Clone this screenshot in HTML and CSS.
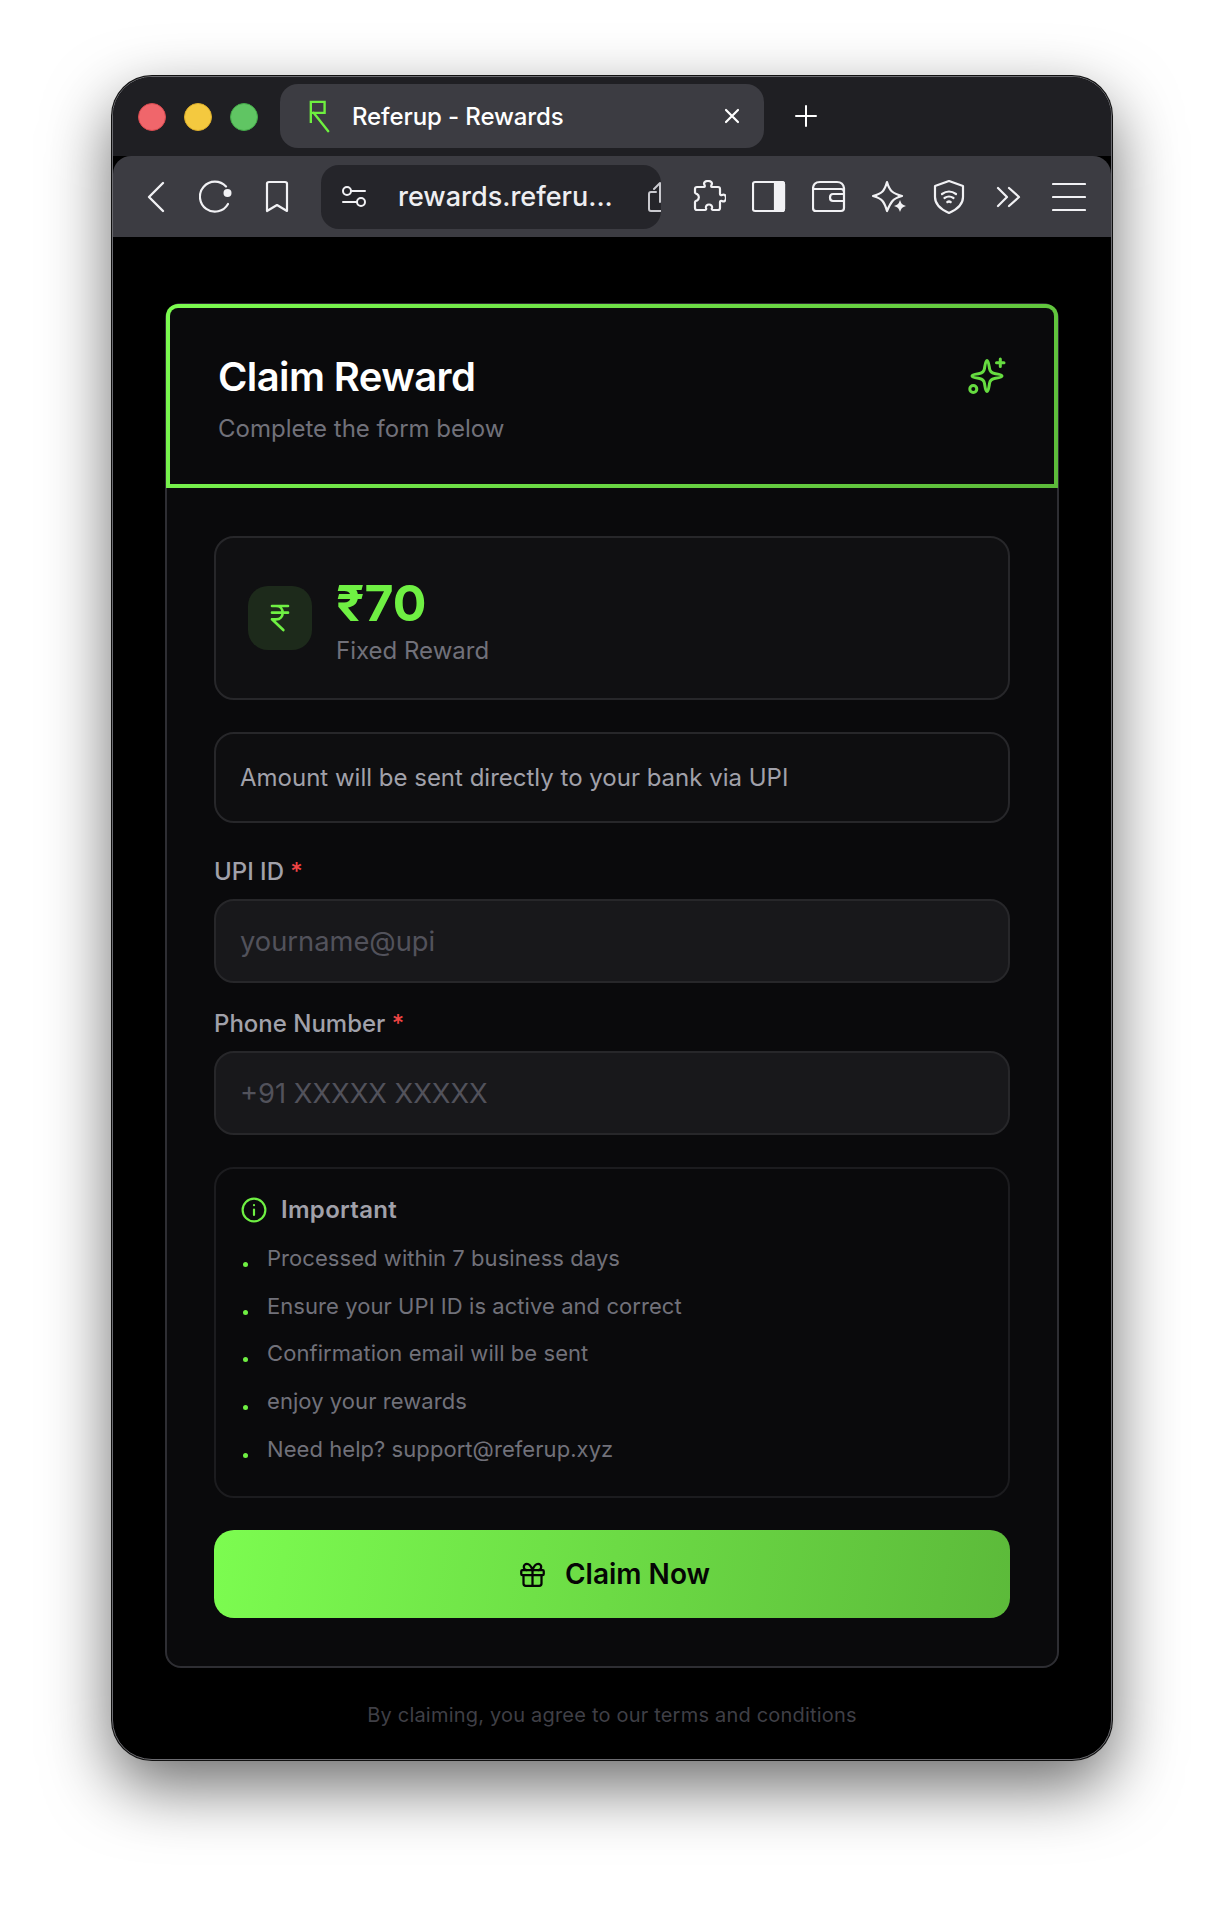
FILE: index.html
```html
<!DOCTYPE html>
<html lang="en">
<head>
  <meta charset="UTF-8">
  <meta name="viewport" content="width=device-width, initial-scale=1.0">
  <title>Referup - Rewards</title>
  <link rel="stylesheet" href="styles.css">
</head>
<body>
  <div class="window">
    <div class="tabbar">
      <div class="lights">
        <span class="light red"></span>
        <span class="light yellow"></span>
        <span class="light green"></span>
      </div>
      <div class="tab">
        <svg class="tab-logo" viewBox="0 0 24 36" fill="none" stroke="#6ef03f" stroke-width="2.6">
          <path d="M2 25V2h15v12H2"/>
          <path d="M5 14l16 20" stroke-linecap="round"/>
        </svg>
        <span class="tab-title">Referup - Rewards</span>
        <svg class="tab-close" viewBox="0 0 16 16" fill="none" stroke="#fff" stroke-width="2.2" stroke-linecap="round">
          <path d="M2 2l12 12M14 2L2 14"/>
        </svg>
      </div>
      <svg class="tab-new" viewBox="0 0 22 22" fill="none" stroke="#fff" stroke-width="2" stroke-linecap="round">
        <path d="M11 1v20M1 11h20"/>
      </svg>
    </div>

    <div class="toolbar">
      <svg class="tool tool-back" viewBox="0 0 34 34" fill="none" stroke="#f1f1f4" stroke-width="2.4" stroke-linecap="round" stroke-linejoin="round">
        <path d="M22 3L8 17l14 14"/>
      </svg>
      <svg class="tool tool-reload" viewBox="0 0 34 34" fill="none" stroke="#f1f1f4" stroke-width="2.2" stroke-linecap="round">
        <path d="M29 24A15 15 0 1 1 27 6.500"/>
        <circle cx="28.500" cy="13" r="4" fill="#f1f1f4" stroke="none"/>
      </svg>
      <svg class="tool tool-mark" viewBox="0 0 34 34" fill="none" stroke="#f1f1f4" stroke-width="2.2" stroke-linejoin="round">
        <path d="M7 3.500Q7 2 9 2h16q2 0 2 1.500V31l-10-6-10 6z"/>
      </svg>
      <div class="urlbar">
        <svg class="url-tune" viewBox="0 0 26 24" fill="none" stroke="#f1f1f4" stroke-width="2" stroke-linecap="round">
          <circle cx="6" cy="6" r="4"/>
          <path d="M10 6h14M2 17h14"/>
          <circle cx="20" cy="17" r="4"/>
        </svg>
        <span class="url-text">rewards.referu...</span>
        <svg class="url-share" viewBox="0 0 24 34" fill="none" stroke="#c9c9ce" stroke-width="2" stroke-linecap="round" stroke-linejoin="round">
          <path d="M9 12H4q-2 0-2 2v15q0 2 2 2h16"/>
          <path d="M13 22V3M7 9l6-6 6 6"/>
        </svg>
      </div>
      <div class="tools">
        <svg class="tool" viewBox="0 0 34 34" fill="none" stroke="#f1f1f4" stroke-width="2.2" stroke-linejoin="round" stroke-linecap="round">
          <path d="M5 7h7c1 0 1-1 .5-2C11 2 14 1 16 1s5 1 3.500 4c-.5 1-.5 2 .5 2h6q2 0 2 2v5c0 1 1 1.500 2 1 2-1 4 0 4 3s-2 4-4 3c-1-.5-2 0-2 1v6q0 2-2 2h-5c-1 0-1.500-1-1-2 .5-2-1-3.500-3-3.500s-3.500 1.500-3 3.500c.5 1 0 2-1 2H5q-2 0-2-2v-6c0-1 1-1 2-1.500 2.500-1.500 2.500-5 0-6.500-1-.5-2-.5-2-1.500V9q0-2 2-2z"/>
        </svg>
        <svg class="tool" viewBox="0 0 34 34" fill="none" stroke="#f1f1f4" stroke-width="2.2" stroke-linejoin="round">
          <rect x="1" y="2" width="31" height="29" rx="2"/>
          <path d="M23 2h7q2 0 2 2v25q0 2-2 2h-7z" fill="#f1f1f4"/>
        </svg>
        <svg class="tool" viewBox="0 0 34 34" fill="none" stroke="#f1f1f4" stroke-width="2.2" stroke-linejoin="round">
          <path d="M1 9q0-7 7-7h17q6 0 7 6v20q0 3-3 3H4q-3 0-3-3z"/>
          <path d="M2 9h27q3 0 3 3"/>
          <path d="M32 14H21q-3 0-3 3.500t3 3.500h11"/>
        </svg>
        <svg class="tool" viewBox="0 0 34 34" fill="none" stroke="#f1f1f4" stroke-width="2.2" stroke-linejoin="round">
          <path d="M15 2q2 7 5 9.500T30 16q-7 2-9.500 5T15 31q-2-7-4.500-10T1 16q7-2 9.500-4.500T15 2z"/>
          <path d="M28 20q1 3 2 4t4 2q-3 1-4 2t-2 4q-1-3-2-4t-4-2q3-1 4-2t2-4z" fill="#f1f1f4" stroke="none"/>
        </svg>
        <svg class="tool" viewBox="0 0 34 34" fill="none" stroke="#f1f1f4" stroke-width="2.2" stroke-linejoin="round" stroke-linecap="round">
          <path d="M17 1l14 5v11q0 10-14 16Q3 27 3 17V6z"/>
          <path d="M10 14q7-5 14 0M12.500 18q4.500-3 9 0"/>
          <path d="M15.500 22q1.500-1 3 0" stroke-width="2.600"/>
        </svg>
        <svg class="tool" viewBox="0 0 34 34" fill="none" stroke="#f1f1f4" stroke-width="2.2" stroke-linecap="round" stroke-linejoin="round">
          <path d="M6 8l9 9-9 9M17 8l10 9-10 9"/>
        </svg>
        <svg class="tool" viewBox="0 0 34 34" fill="none" stroke="#f1f1f4" stroke-width="2.2" stroke-linecap="round">
          <path d="M1 4h32M1 17h32M1 30h32"/>
        </svg>
      </div>
    </div>

    <div class="page">
      <div class="card">
        <div class="card-head">
          <div>
            <h1 class="card-title">Claim Reward</h1>
            <p class="card-sub">Complete the form below</p>
          </div>
          <svg class="head-icon" viewBox="0 0 38 38" fill="none" stroke="#66dc40" stroke-width="3" stroke-linecap="round" stroke-linejoin="round">
            <path d="M19 3.500c1.500 0 2 5 2.500 8s2 4.500 5 5 7.500 1 7.500 2.500-4.500 2-7.500 2.500-4.500 2-5 5-1 8-2.500 8-2-5-2.500-8-2-4.500-5-5-7.500-1-7.500-2.500 4.500-2 7.500-2.500 4.500-2 5-5 1-8 2.500-8z"/>
            <path d="M32.300 2v7.500M28.500 5.700h7.500"/>
            <circle cx="5.300" cy="32" r="3.500"/>
          </svg>
        </div>
        <div class="card-body">
          <div class="reward">
            <div class="reward-icon">
              <svg viewBox="0 0 24 24" fill="none" stroke="#6ff043" stroke-width="2" stroke-linecap="round" stroke-linejoin="round">
                <path d="M6 3h12M6 8h12M6 13l8.500 8M6 13h3c6.670 0 6.670-10 0-10"/>
              </svg>
            </div>
            <div>
              <div class="reward-amount">₹70</div>
              <div class="reward-label">Fixed Reward</div>
            </div>
          </div>

          <div class="note">Amount will be sent directly to your bank via UPI</div>

          <div class="field">
            <label class="field-label" for="upi">UPI ID <span class="req">*</span></label>
            <input class="field-input" id="upi" type="text" placeholder="yourname@upi">
          </div>

          <div class="field">
            <label class="field-label" for="phone">Phone Number <span class="req">*</span></label>
            <input class="field-input" id="phone" type="text" placeholder="+91 XXXXX XXXXX">
          </div>

          <div class="important">
            <div class="important-head">
              <svg viewBox="0 0 24 24" fill="none" stroke="#6ff043" stroke-width="2" stroke-linecap="round">
                <circle cx="12" cy="12" r="10.500"/>
                <path d="M12 16.500v-5M12 7.500h.01"/>
              </svg>
              <span>Important</span>
            </div>
            <ul class="important-list">
              <li>Processed within 7 business days</li>
              <li>Ensure your UPI ID is active and correct</li>
              <li>Confirmation email will be sent</li>
              <li>enjoy your rewards</li>
              <li>Need help? support@referup.xyz</li>
            </ul>
          </div>

          <button class="claim" type="button">
            <svg viewBox="0 0 24 24" fill="none" stroke="#050505" stroke-width="2" stroke-linecap="round" stroke-linejoin="round">
              <rect x="2" y="8" width="20" height="4.500" rx="1"/>
              <path d="M12 8v14M20 12.500V20a2 2 0 0 1-2 2H6a2 2 0 0 1-2-2v-7.500"/>
              <path d="M7 8a2.700 2.700 0 0 1 0-5.500C10 2.500 12 8 12 8s2-5.500 5-5.500A2.700 2.700 0 0 1 17 8"/>
            </svg>
            Claim Now
          </button>
        </div>
      </div>
      <p class="terms">By claiming, you agree to our terms and conditions</p>
    </div>
  </div>
</body>
</html>
```

FILE: styles.css
```css
* {
  box-sizing: border-box;
}

body {
  margin: 0;
  padding: 76px 0 0 112px;
  background-color: #fff;
  font-family: Inter, "Noto Sans", sans-serif;
  height: 1908px;
  overflow: hidden;
}

.window {
  width: 1000px;
  height: 1684px;
  background-color: #000;
  border: 1px solid #6b6b70;
  border-radius: 40px;
  box-shadow: 0 0 0 1px #111, 0 26px 66px rgba(0, 0, 0, 0.58);
  overflow: hidden;
}

/* browser chrome */
.tabbar {
  height: 79px;
  background-color: #1f1f23;
  display: flex;
  align-items: flex-start;
  padding: 7px 0 0 25px;
}

.lights {
  display: flex;
  gap: 18px;
  margin: 19px 22px 0 0;
}

.light {
  width: 28px;
  height: 28px;
  border-radius: 50%;
}

.light.red {
  background-color: #f0666b;
  border: 1px solid #d84a50;
}

.light.yellow {
  background-color: #f4c93f;
  border: 1px solid #dcae2c;
}

.light.green {
  background-color: #60c563;
  border: 1px solid #43a948;
}

.tab {
  width: 484px;
  height: 64px;
  background-color: #3c3c42;
  border-radius: 18px;
  display: flex;
  align-items: center;
  padding: 0 24px 0 29px;
  color: #fff;
}

.tab-logo {
  width: 22px;
  height: 33px;
  flex: none;
}

.tab-title {
  font-size: 24px;
  font-weight: 500;
  letter-spacing: -0.1px;
  margin-left: 21px;
  flex: 1;
}

.tab-close {
  width: 16px;
  height: 16px;
  flex: none;
}

.tab-new {
  width: 22px;
  height: 22px;
  margin: 21px 0 0 31px;
}

.toolbar {
  height: 81px;
  background-color: #3c3c42;
  border-radius: 18px 18px 0 0;
  display: flex;
  align-items: center;
  padding: 0 26px 0 28px;
}

.tool {
  width: 34px;
  height: 34px;
  flex: none;
}

.tool-back {
  margin-right: 24px;
}

.tool-reload {
  margin-right: 27px;
}

.tool-mark {
  margin-right: 27px;
}

.urlbar {
  width: 340px;
  height: 64px;
  background-color: #25252a;
  border-radius: 18px;
  display: flex;
  align-items: center;
  padding-left: 20px;
  overflow: hidden;
  flex: none;
}

.url-tune {
  width: 26px;
  height: 24px;
  flex: none;
}

.url-text {
  color: #eeeef1;
  font-size: 27px;
  font-weight: 500;
  margin-left: 31px;
  white-space: nowrap;
  flex: none;
}

.url-share {
  width: 24px;
  height: 34px;
  flex: none;
  margin-left: 34px;
}

.tools {
  display: flex;
  gap: 26px;
  margin-left: 31px;
}

/* page */
.page {
  padding: 66px 52px 0;
}

.card {
  background-color: #0a0a0c;
  border: 2px solid #2e2e33;
  border-radius: 16px;
}

.card-head {
  height: 184px;
  margin: -1px -1px 0;
  border: 4px solid transparent;
  border-radius: 12px 12px 0 0;
  background: linear-gradient(#0a0a0c, #0a0a0c) padding-box, linear-gradient(135deg, #7cfc50, #5cba3a) border-box;
  display: flex;
  justify-content: space-between;
  padding: 45px 48px 0 48px;
}

.card-title {
  margin: 0;
  color: #fff;
  font-size: 40px;
  font-weight: 600;
  line-height: 48px;
  letter-spacing: -0.6px;
}

.card-sub {
  margin: 13px 0 0;
  color: #71717a;
  font-size: 24px;
  line-height: 30px;
}

.head-icon {
  width: 38px;
  height: 38px;
  margin-top: 4px;
}

.card-body {
  padding: 48px 47px 48px;
  display: flex;
  flex-direction: column;
}

.reward {
  height: 164px;
  background-color: #101012;
  border: 2px solid #27272a;
  border-radius: 20px;
  display: flex;
  align-items: center;
  gap: 24px;
  padding: 0 32px;
}

.reward-icon {
  width: 64px;
  height: 64px;
  border-radius: 20px;
  background-color: #1d2a1b;
  display: flex;
  align-items: center;
  justify-content: center;
}

.reward-icon svg {
  width: 32px;
  height: 32px;
}

.reward-amount {
  color: #6ff043;
  font-size: 50px;
  font-weight: 700;
  line-height: 56px;
  padding-top: 4px;
}

.reward-label {
  color: #71717a;
  font-size: 24px;
  line-height: 30px;
  margin-top: 5px;
}

.note {
  height: 91px;
  margin-top: 32px;
  background-color: #0e0e10;
  border: 2px solid #27272a;
  border-radius: 20px;
  color: #a1a1aa;
  font-size: 24px;
  display: flex;
  align-items: center;
  padding: 0 24px;
}

.field {
  margin-top: 34px;
}

.field + .field {
  margin-top: 26px;
}

.field-label {
  display: block;
  color: #a1a1aa;
  font-size: 24px;
  font-weight: 500;
  line-height: 30px;
  margin-bottom: 12px;
}

.req {
  color: #ef4444;
}

.field-input {
  display: block;
  width: 100%;
  height: 84px;
  background-color: #18181b;
  border: 2px solid #27272a;
  border-radius: 20px;
  padding: 0 24px;
  font-family: inherit;
  font-size: 27.300px;
  color: #fff;
}

.field-input::placeholder {
  color: #52525b;
  opacity: 1;
}

.important {
  height: 331px;
  margin-top: 32px;
  border: 2px solid #1c1c1f;
  border-radius: 20px;
  padding: 25px 25px;
}

.important-head {
  display: flex;
  align-items: center;
  gap: 14px;
  color: #a1a1aa;
  font-size: 24px;
  font-weight: 600;
  letter-spacing: 0.3px;
  line-height: 32px;
}

.important-head svg {
  width: 26px;
  height: 26px;
}

.important-list {
  list-style: none;
  margin: 18px 0 0;
  padding: 0;
}

.important-list li {
  position: relative;
  color: #71717a;
  font-size: 22px;
  letter-spacing: 0.06px;
  line-height: 28px;
  margin-bottom: 19.700px;
  padding-left: 26px;
}

.important-list li::before {
  content: "";
  position: absolute;
  left: 2px;
  top: 18px;
  width: 5px;
  height: 5px;
  border-radius: 50%;
  background-color: #6ff043;
}

.claim {
  height: 88px;
  margin-top: 32px;
  border: 0;
  border-radius: 20px;
  background: linear-gradient(100deg, #7cfc50, #5cba3a);
  color: #050505;
  font-family: inherit;
  font-size: 28px;
  font-weight: 600;
  display: flex;
  align-items: center;
  justify-content: center;
  gap: 19px;
  padding: 0 0 0 5px;
}

.claim svg {
  width: 27px;
  height: 27px;
}

.terms {
  margin: 35px 0 0;
  text-align: center;
  color: #3f3f46;
  font-size: 20px;
  letter-spacing: 0.2px;
  line-height: 24px;
}
```
